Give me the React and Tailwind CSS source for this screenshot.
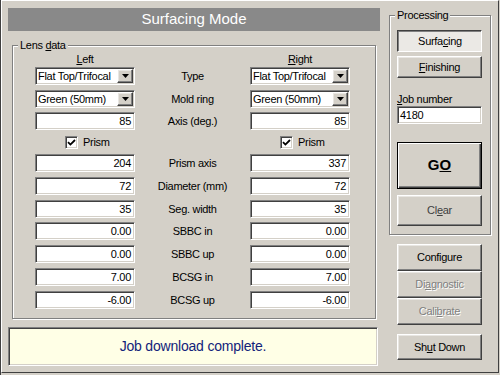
import React from "react";

const sunken =
  "border border-t-[#808080] border-l-[#808080] border-b-white border-r-white shadow-[inset_1px_1px_0_#404040,inset_-1px_-1px_0_#d4d0c8]";
const raised =
  "border border-t-white border-l-white border-b-[#404040] border-r-[#404040] shadow-[inset_-1px_-1px_0_#808080,inset_1px_1px_0_#e8e6e2]";
const etched = "relative border border-[#808080] shadow-[1px_1px_0_white,inset_1px_1px_0_white]";

const Arrow = () => (
  <svg width="7" height="4" viewBox="0 0 7 4">
    <path d="M0 0h7L3.5 4z" fill="black" />
  </svg>
);

const Combo = ({ value }) => (
  <div className={`${sunken} h-[18px] w-[100px] bg-white flex items-center`}>
    <span className="flex-1 pl-[2px] whitespace-nowrap overflow-hidden leading-[14px]">{value}</span>
    <div className={`${raised} bg-[#d4d0c8] w-[16px] h-[14px] mr-[1px] flex items-center justify-center`}>
      <Arrow />
    </div>
  </div>
);

const Field = ({ value }) => (
  <div className={`${sunken} h-[18px] w-[100px] bg-white text-right pr-[3px] leading-[16px]`}>{value}</div>
);

const Check = () => (
  <div className="flex items-center h-[13px] w-[100px] pl-[30px]">
    <div className={`${sunken} w-[13px] h-[13px] bg-white flex items-center justify-center`}>
      <svg width="9" height="9" viewBox="0 0 9 9">
        <path d="M1 4.2 L3.4 6.6 L8 2" stroke="black" strokeWidth="1.8" fill="none" />
      </svg>
    </div>
    <span className="ml-[5px] leading-[13px]">Prism</span>
  </div>
);

const Row = ({ label, left, right, combo }) => (
  <div className="flex items-center h-[18px]">
    <div className="ml-[22px]">{combo ? <Combo value={left} /> : <Field value={left} />}</div>
    <div className="w-[115px] text-center leading-[18px]">{label}</div>
    {combo ? <Combo value={right} /> : <Field value={right} />}
  </div>
);

const Button = ({ children, className = "", disabled }) => (
  <div
    className={`${raised} w-[85px] bg-[#d4d0c8] flex items-center justify-center ${
      disabled ? "text-[#808080] [text-shadow:1px_1px_0_white]" : "text-black"
    } ${className}`}
  >
    {children}
  </div>
);

const rows = [
  ["Prism axis", "204", "337"],
  ["Diameter (mm)", "72", "72"],
  ["Seg. width", "35", "35"],
  ["SBBC in", "0.00", "0.00"],
  ["SBBC up", "0.00", "0.00"],
  ["BCSG in", "7.00", "7.00"],
  ["BCSG up", "-6.00", "-6.00"],
];

export default function App() {
  return (
    <div className="w-[500px] h-[375px] bg-[#d4d0c8] border-l border-l-[#404040] font-['Liberation_Sans',Arial,sans-serif] text-[11px] tracking-[-0.3px] text-black overflow-hidden">
      <div className="w-[498px] h-[373px] border border-t-white border-l-white border-b-[#404040] border-r-[#404040] flex pl-[6px] pt-[7px]">
        {/* Left side */}
        <div className="w-[372px] flex flex-col">
          <div className="h-[23px] bg-[#898989] text-white text-[15px] tracking-normal flex items-center justify-center">
            Surfacing Mode
          </div>

          <div className={`${etched} mt-[14px] ml-[4px] w-[364px] h-[274px] pt-[6px]`}>
            <span className="absolute -top-[7px] left-[5px] px-[2px] bg-[#d4d0c8] leading-[13px]">
              Lens <u>d</u>ata
            </span>
            <div className="flex h-[14px] leading-[14px]">
              <div className="ml-[22px] w-[100px] text-center">
                <u>L</u>eft
              </div>
              <div className="w-[115px]" />
              <div className="w-[100px] text-center">
                <u>R</u>ight
              </div>
            </div>
            <div className="flex flex-col gap-[4.7px] mt-[1px]">
              <Row label="Type" left="Flat Top/Trifocal" right="Flat Top/Trifocal" combo />
              <Row label="Mold ring" left="Green (50mm)" right="Green (50mm)" combo />
              <Row label="Axis (deg.)" left="85" right="85" />
            </div>
            <div className="flex mt-[6px]">
              <div className="ml-[22px]">
                <Check />
              </div>
              <div className="w-[115px]" />
              <Check />
            </div>
            <div className="flex flex-col gap-[4.7px] mt-[5px]">
              {rows.map(([label, l, r]) => (
                <Row key={label} label={label} left={l} right={r} />
              ))}
            </div>
          </div>

          <div
            className={`${sunken} mt-[8px] w-[370px] h-[39px] bg-[#ffffe6] flex items-center justify-center text-[14px] tracking-[-0.2px] text-[#13237a]`}
          >
            Job download complete.
          </div>
        </div>

        {/* Right side */}
        <div className="ml-[9px] w-[102px] flex flex-col">
          <div className={`${etched} mt-[7px] h-[220px] pl-[7px] pt-[14px] flex flex-col`}>
            <span className="absolute -top-[7px] left-[5px] px-[2px] bg-[#d4d0c8] leading-[13px]">Processing</span>
            <div className="w-[85px] h-[22px] bg-[#ebe9e5] border border-t-[#404040] border-l-[#404040] border-b-white border-r-white shadow-[inset_1px_1px_0_#808080] flex items-center justify-center pt-[1px] pl-[1px]">
              Surfa<u>c</u>ing
            </div>
            <Button className="h-[22px] mt-[4px]">
              <u>F</u>inishing
            </Button>
            <div className="mt-[15px] leading-[13px]">
              <u>J</u>ob number
            </div>
            <div className={`${sunken} w-[85px] h-[18px] bg-white pl-[2px] leading-[16px]`}>4180</div>
            <div className="mt-[18px] w-[85px] h-[47px] bg-[#d4d0c8] border border-black shadow-[inset_1px_1px_0_white,inset_-1px_-1px_0_#404040,inset_-2px_-2px_0_#808080] flex items-center justify-center text-[15px] font-bold tracking-normal">
              G<u>O</u>
            </div>
            <Button className="h-[31px] mt-[6px] !text-[#404040]">
              Cl<u>e</u>ar
            </Button>
          </div>

          <div className="ml-[8px] mt-[9px] flex flex-col">
            <Button className="h-[27px]">
              Confi<u>g</u>ure
            </Button>
            <Button className="h-[27px]" disabled>
              Di<u>a</u>gnostic
            </Button>
            <Button className="h-[27px]" disabled>
              Cali<u>b</u>rate
            </Button>
            <Button className="h-[26px] mt-[9px]">
              Sh<u>u</u>t Down
            </Button>
          </div>
        </div>
      </div>
    </div>
  );
}
